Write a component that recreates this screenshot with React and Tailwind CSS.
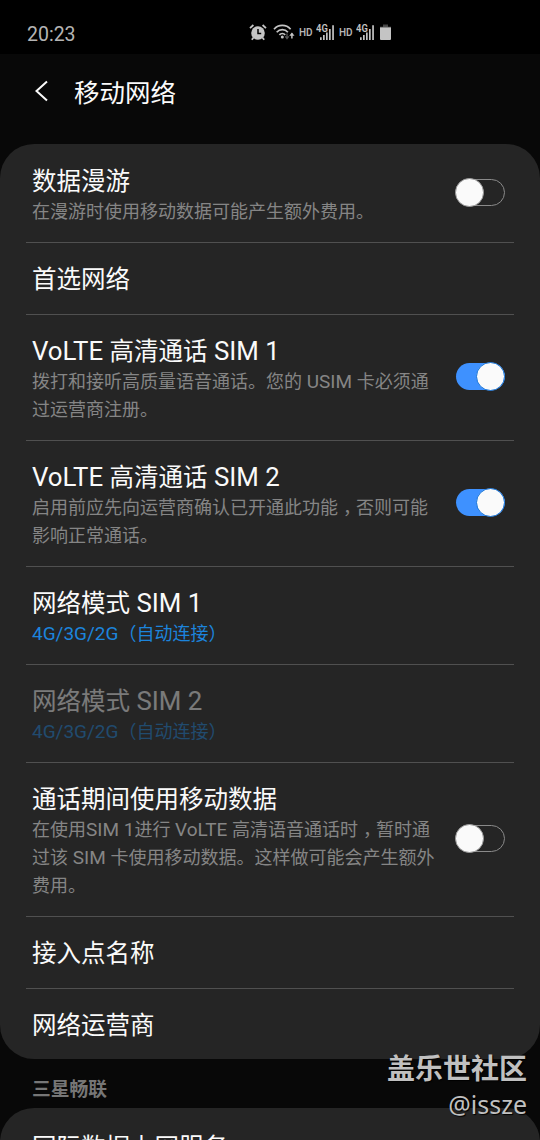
import React from "react";

const SETTINGS = [
  { title: "数据漫游", lines: ["在漫游时使用移动数据可能产生额外费用。"], toggle: "off" },
  { title: "首选网络" },
  {
    title: "VoLTE 高清通话 SIM 1",
    lines: ["拨打和接听高质量语音通话。您的 USIM 卡必须通", "过运营商注册。"],
    toggle: "on",
  },
  {
    title: "VoLTE 高清通话 SIM 2",
    lines: ["启用前应先向运营商确认已开通此功能，否则可能", "影响正常通话。"],
    toggle: "on",
  },
  { title: "网络模式 SIM 1", lines: ["4G/3G/2G（自动连接）"], accent: true },
  { title: "网络模式 SIM 2", lines: ["4G/3G/2G（自动连接）"], accent: true, disabled: true },
  {
    title: "通话期间使用移动数据",
    lines: [
      "在使用SIM 1进行 VoLTE 高清语音通话时，暂时通",
      "过该 SIM 卡使用移动数据。这样做可能会产生额外",
      "费用。",
    ],
    toggle: "off",
  },
  { title: "接入点名称" },
  { title: "网络运营商" },
];

// -------- STATUS BAR ICONS --------
function AlarmIcon() {
  return (
    <svg width="18" height="17" viewBox="0 0 18 17" fill="none">
      <circle cx="9" cy="9" r="6.8" fill="#c4c4c4" />
      <path d="M9 5v4.4h3.2" stroke="#000" strokeWidth="1.5" />
      <path d="M1 4.2 4.4 1M17 4.2 13.6 1M4.6 13.5 2.8 15.8M13.4 13.5l1.8 2.3" stroke="#c4c4c4" strokeWidth="1.8" />
    </svg>
  );
}

function WifiIcon() {
  return (
    <svg width="22" height="17" viewBox="0 0 22 17" fill="none">
      <path d="M1 5.2C5.4.2 13.2.2 17.6 5.2M3.7 8.2c3-3.5 8.2-3.5 11.2 0M6.4 10.9c1.6-1.9 4.2-1.9 5.8 0" stroke="#c4c4c4" strokeWidth="1.7" />
      <circle cx="9.3" cy="13" r="1.5" fill="#c4c4c4" />
      <path d="M14 9.5v5M12.3 12.4l1.7 2.3 1.7-2.3" stroke="#555" strokeWidth="1.3" />
      <path d="M18.9 14.6v-5" stroke="#c4c4c4" strokeWidth="1.5" />
      <path d="M16.3 11.8 18.9 8.6l2.6 3.2z" fill="#c4c4c4" />
    </svg>
  );
}

function SignalIcon() {
  return (
    <svg width="19" height="18" viewBox="0 0 19 18" fill="#c4c4c4">
      <text x="0" y="8.6" fontSize="10" fontWeight="600" textLength="11.8" lengthAdjust="spacingAndGlyphs">4G</text>
      <path d="M4 14.2h1.7V17H4zM7 12h1.7v5H7zM10 9.4h1.7V17H10zM13 6h1.7v11H13zM16.2 2.2h1.7V17h-1.7z" />
    </svg>
  );
}

function BatteryIcon() {
  return (
    <svg width="11" height="17" viewBox="0 0 11 17">
      <path d="M3 .5h5V3H3z" fill="#444" />
      <path d="M0 2.8h11V4H0z" fill="#777" />
      <path d="M0 3.8h11V15a1 1 0 0 1-1 1H1a1 1 0 0 1-1-1z" fill="#c4c4c4" />
    </svg>
  );
}

function StatusBar() {
  return (
    <div className="flex h-[54px] bg-black pl-[27px] pt-[20px] text-[#b4b4b4]">
      <div className="w-[222px] pt-px text-[19.5px] leading-[27px]">20:23</div>
      <div className="flex h-[24px] items-center">
        <AlarmIcon />
        <span className="ml-[6px]"><WifiIcon /></span>
        <span className="ml-[4px] w-[17px] pt-px text-[10px] font-semibold leading-[10px]">HD</span>
        <SignalIcon />
        <span className="ml-[4px] w-[17px] pt-px text-[10px] font-semibold leading-[10px]">HD</span>
        <SignalIcon />
        <span className="ml-[5px]"><BatteryIcon /></span>
      </div>
    </div>
  );
}

// -------- ROWS --------
function Toggle({ on }) {
  if (on) {
    return (
      <div className="mb-[2px] flex h-[28px] w-[49px] shrink-0 items-center">
        <div className="flex h-[27px] w-[49px] items-center justify-end rounded-full bg-[#3e91ff]">
          <div className="size-[29px] shrink-0 rounded-full border border-[#1673d8] bg-[#fafafa]" />
        </div>
      </div>
    );
  }
  return (
    <div className="mb-[2px] flex h-[28px] w-[49px] shrink-0 items-center">
      <div className="flex h-[27px] w-[49px] items-center rounded-full border border-[#8a8a8a]">
        <div className="-ml-[2px] size-[29px] shrink-0 rounded-full border border-[#9a9a9a] bg-[#fafafa]" />
      </div>
    </div>
  );
}

// Latin runs are set slightly larger than the Chinese ones,
// and the full-width comma sits in the middle of its cell
function MixedText({ text }) {
  return text.split(/([\x20-\x7e]+|，)/).map((part, i) => {
    if (part === "，") {
      return (
        <span key={i} className="pl-[5px] pr-[4px] [font-feature-settings:'halt']">
          ，
        </span>
      );
    }
    if (i % 2 === 1) {
      return (
        <span key={i} className="text-[1.055em]">
          {part}
        </span>
      );
    }
    return part;
  });
}

function Row({ item, first }) {
  const { title, lines, toggle, accent, disabled } = item;
  const subColor = accent ? "text-[#1c84dc]" : "text-[#858585]";

  return (
    <div
      className={`mx-[26px] flex items-center justify-between pl-[6px] pr-[9px] ${
        first ? "pt-px" : "border-t border-[#505050]"
      }`}
    >
      <div className={`pt-[20px] ${lines ? "pb-[16px]" : "pb-[18px]"} ${disabled ? "opacity-40" : ""}`}>
        <div className="h-[33px] whitespace-nowrap text-[24.5px] leading-[33px] text-[#fafafa]">
          <MixedText text={title} />
        </div>
        {lines && (
          <div className={`w-[406px] text-[18px] leading-[28px] ${subColor}`}>
            {lines.map((text) => (
              <div key={text} className="h-[28px] whitespace-nowrap">
                <MixedText text={text} />
              </div>
            ))}
          </div>
        )}
      </div>
      {toggle && <Toggle on={toggle === "on"} />}
    </div>
  );
}

export default function App() {
  return (
    <div
      lang="zh-CN"
      className="relative h-[1140px] w-[540px] overflow-hidden bg-[#080808] font-[Roboto,'Noto_Sans_CJK_SC',sans-serif]"
    >
      <StatusBar />

      {/* HEADER */}
      <div className="flex h-[90px] items-start pl-[34px] pt-[20px]">
        <svg className="mt-[6px]" width="16" height="22" viewBox="0 0 16 22" fill="none">
          <path d="M13 1.5 2.5 11 13 20.5" stroke="#fafafa" strokeWidth="2" />
        </svg>
        <div className="ml-[24px] pt-px text-[25.5px] leading-[36px] text-[#fafafa]">移动网络</div>
      </div>

      <div className="h-[915px] rounded-[34px] bg-[#252525]">
        {SETTINGS.map((item, i) => (
          <Row key={item.title} item={item} first={i === 0} />
        ))}
      </div>

      <div className="h-[49px] pl-[32px] pt-[17px] text-[18.8px] font-bold leading-[28px] text-[#767676]">
        三星畅联
      </div>

      <div className="h-[120px] rounded-t-[34px] bg-[#252525] pt-[2px]">
        <Row item={{ title: "国际数据上网服务" }} first />
      </div>

      {/* WATERMARK */}
      <div className="absolute bottom-[18px] right-[13px] text-right text-[#c0c0c0] [text-shadow:1px_1px_1px_#000]">
        <div className="text-[28px] font-bold leading-[32px]">盖乐世社区</div>
        <div className="font-['Noto_Sans',sans-serif] text-[25px] leading-[36px]">@issze</div>
      </div>
    </div>
  );
}
